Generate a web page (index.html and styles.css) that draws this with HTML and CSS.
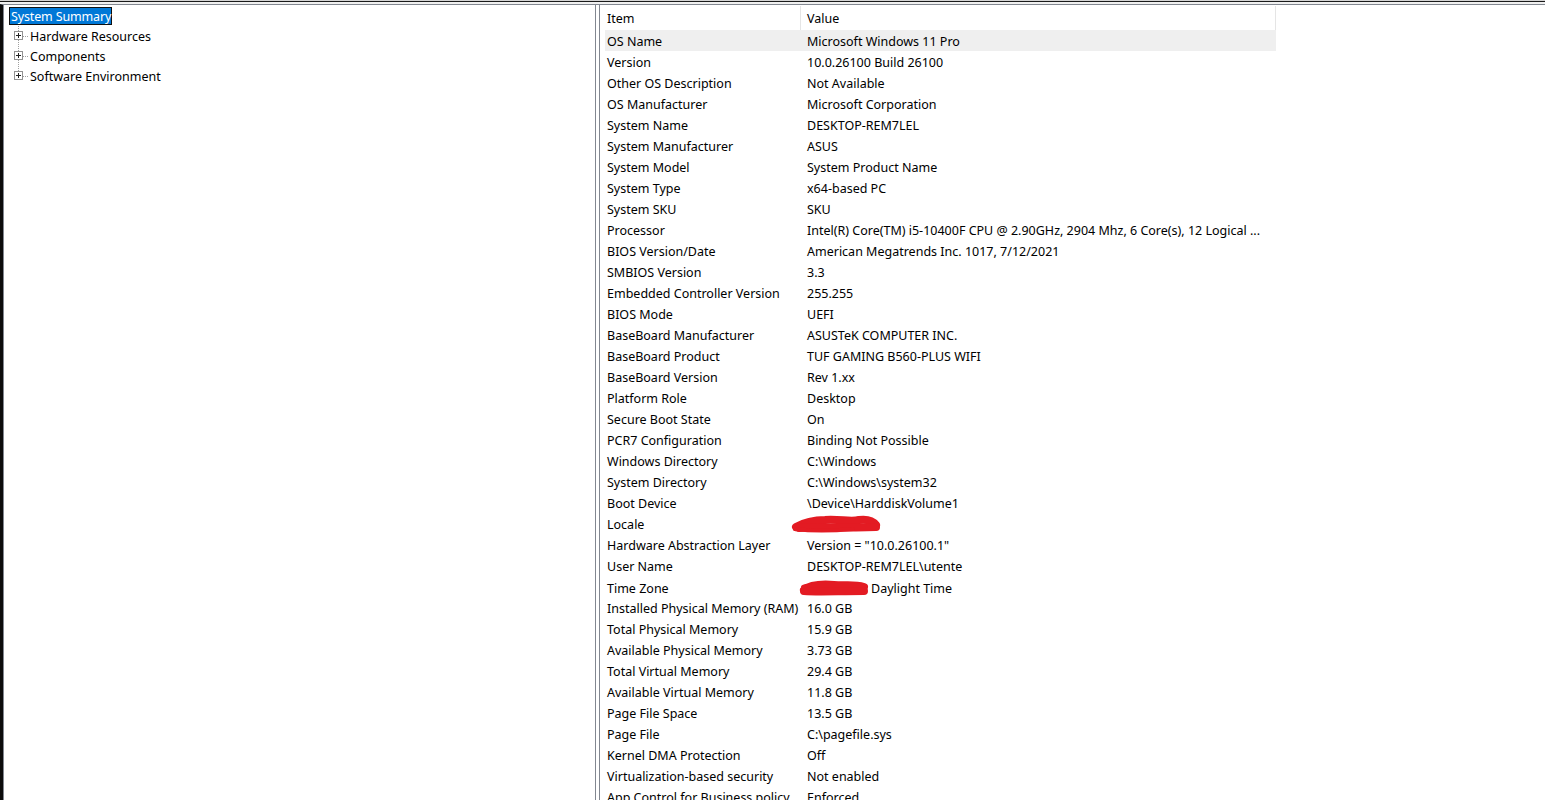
FILE: index.html
```
<!DOCTYPE html>
<html lang="en">
<head>
  <meta charset="UTF-8">
  <title>System Information</title>
  <link rel="stylesheet" href="styles.css">
</head>
<body>
  <div class="chrome"></div>
  <div class="app">
    <div class="tree-pane">
      <div class="tree">
        <div class="node root"><span class="sel">System Summary</span></div>
        <div class="node">
          <svg class="twig" width="20" height="20" viewBox="0 0 20 20">
            <path class="dots" d="M9.5 0V6M9.5 14V20M14 10.5H20"/>
            <rect class="box" x="5.5" y="5.5" width="8" height="8"/>
            <path class="plus" d="M7 9.5H12M9.5 7V12"/>
          </svg>
          <span>Hardware Resources</span>
        </div>
        <div class="node">
          <svg class="twig" width="20" height="20" viewBox="0 0 20 20">
            <path class="dots" d="M9.5 0V6M9.5 14V20M14 10.5H20"/>
            <rect class="box" x="5.5" y="5.5" width="8" height="8"/>
            <path class="plus" d="M7 9.5H12M9.5 7V12"/>
          </svg>
          <span>Components</span>
        </div>
        <div class="node">
          <svg class="twig" width="20" height="20" viewBox="0 0 20 20">
            <path class="dots" d="M9.5 0V6M14 10.5H20"/>
            <rect class="box" x="5.5" y="5.5" width="8" height="8"/>
            <path class="plus" d="M7 9.5H12M9.5 7V12"/>
          </svg>
          <span>Software Environment</span>
        </div>
      </div>
    </div>

    <div class="list-pane">
      <div class="list">
        <div class="head">
          <div class="hcell">Item</div>
          <div class="hcell">Value</div>
        </div>
        <div class="row hot"><div class="cell">OS Name</div><div class="cell">Microsoft Windows 11 Pro</div></div>
        <div class="row"><div class="cell">Version</div><div class="cell">10.0.26100 Build 26100</div></div>
        <div class="row"><div class="cell">Other OS Description</div><div class="cell">Not Available</div></div>
        <div class="row"><div class="cell">OS Manufacturer</div><div class="cell">Microsoft Corporation</div></div>
        <div class="row"><div class="cell">System Name</div><div class="cell">DESKTOP-REM7LEL</div></div>
        <div class="row"><div class="cell">System Manufacturer</div><div class="cell">ASUS</div></div>
        <div class="row"><div class="cell">System Model</div><div class="cell">System Product Name</div></div>
        <div class="row"><div class="cell">System Type</div><div class="cell">x64-based PC</div></div>
        <div class="row"><div class="cell">System SKU</div><div class="cell">SKU</div></div>
        <div class="row"><div class="cell">Processor</div><div class="cell">Intel(R) Core(TM) i5-10400F CPU @ 2.90GHz, 2904 Mhz, 6 Core(s), 12 Logical ...</div></div>
        <div class="row"><div class="cell">BIOS Version/Date</div><div class="cell">American Megatrends Inc. 1017, 7/12/2021</div></div>
        <div class="row"><div class="cell">SMBIOS Version</div><div class="cell">3.3</div></div>
        <div class="row"><div class="cell">Embedded Controller Version</div><div class="cell">255.255</div></div>
        <div class="row"><div class="cell">BIOS Mode</div><div class="cell">UEFI</div></div>
        <div class="row"><div class="cell">BaseBoard Manufacturer</div><div class="cell">ASUSTeK COMPUTER INC.</div></div>
        <div class="row"><div class="cell">BaseBoard Product</div><div class="cell">TUF GAMING B560-PLUS WIFI</div></div>
        <div class="row"><div class="cell">BaseBoard Version</div><div class="cell">Rev 1.xx</div></div>
        <div class="row"><div class="cell">Platform Role</div><div class="cell">Desktop</div></div>
        <div class="row"><div class="cell">Secure Boot State</div><div class="cell">On</div></div>
        <div class="row"><div class="cell">PCR7 Configuration</div><div class="cell">Binding Not Possible</div></div>
        <div class="row"><div class="cell">Windows Directory</div><div class="cell">C:\Windows</div></div>
        <div class="row"><div class="cell">System Directory</div><div class="cell">C:\Windows\system32</div></div>
        <div class="row"><div class="cell">Boot Device</div><div class="cell">\Device\HarddiskVolume1</div></div>
        <div class="row"><div class="cell">Locale</div><div class="cell">
          <svg class="scribble locale" width="92" height="20" viewBox="0 0 92 20">
            <path d="M5 13C12 9 22 6 34 6C48 5 60 8 68 6C76 5 82 7 85 11"/>
            <path d="M8 14C25 13 50 14 85 13"/>
            <path class="thin" d="M4 15C20 17 40 17 62 15"/>
          </svg>
        </div></div>
        <div class="row"><div class="cell">Hardware Abstraction Layer</div><div class="cell">Version = "10.0.26100.1"</div></div>
        <div class="row"><div class="cell">User Name</div><div class="cell">DESKTOP-REM7LEL\utente</div></div>
        <div class="row"><div class="cell">Time Zone</div><div class="cell">
          <svg class="scribble zone" width="72" height="20" viewBox="0 0 72 20">
            <path d="M6 12C12 7 24 6 36 7C48 8 56 6 66 9"/>
            <path d="M6 13C20 14 40 13 66 13"/>
            <path class="thin" d="M5 9L8 8"/>
          </svg><span>Daylight Time</span>
        </div></div>
        <div class="row"><div class="cell">Installed Physical Memory (RAM)</div><div class="cell">16.0 GB</div></div>
        <div class="row"><div class="cell">Total Physical Memory</div><div class="cell">15.9 GB</div></div>
        <div class="row"><div class="cell">Available Physical Memory</div><div class="cell">3.73 GB</div></div>
        <div class="row"><div class="cell">Total Virtual Memory</div><div class="cell">29.4 GB</div></div>
        <div class="row"><div class="cell">Available Virtual Memory</div><div class="cell">11.8 GB</div></div>
        <div class="row"><div class="cell">Page File Space</div><div class="cell">13.5 GB</div></div>
        <div class="row"><div class="cell">Page File</div><div class="cell">C:\pagefile.sys</div></div>
        <div class="row"><div class="cell">Kernel DMA Protection</div><div class="cell">Off</div></div>
        <div class="row"><div class="cell">Virtualization-based security</div><div class="cell">Not enabled</div></div>
        <div class="row"><div class="cell">App Control for Business policy</div><div class="cell">Enforced</div></div>
      </div>
    </div>
  </div>
</body>
</html>
```

FILE: styles.css
```
*{
  box-sizing: border-box;
}
body{
  margin: 0;
  height: 800px;
  overflow: hidden;
  background: #fff;
  color: #000;
  font-family: "Noto Sans", "Open Sans", sans-serif;
  font-size: 12.5px;
}
.chrome{
  height: 4px;
  background: #1a1a1a;
  border-top: 1px solid #d4d4d4;
  border-bottom: 2px solid #f0f0f0;
}
.app{
  display: flex;
  gap: 3px;
  height: 796px;
  border-left: 3px solid #0c0c0c;
  border-top: 1px solid #828790;
}
.tree-pane{
  width: 593px;
  flex: none;
  border-left: 1px solid #828790;
  border-right: 1px solid #828790;
}
.list-pane{
  flex: 1;
  border-left: 1px solid #828790;
  overflow: hidden;
}

/* tree */
.tree{
  padding: 1px 0 0 5px;
}
.node{
  display: flex;
  align-items: center;
  height: 20px;
  white-space: nowrap;
}
.node span{
  margin-left: 1px;
  padding-top: 1px;
}
.sel{
  display: inline-flex;
  align-items: center;
  height: 18px;
  padding: 1px 0 0 1px;
  margin-left: 0 !important;
  background: #0078d7;
  color: #fff;
  border: 1px solid #111;
  letter-spacing: -0.15px;
}
.twig{
  flex: none;
  display: block;
}
.twig .dots{
  fill: none;
  stroke: #a0a0a0;
  stroke-width: 1;
  stroke-dasharray: 1 1;
}
.twig .box{
  fill: #fff;
  stroke: #919191;
}
.twig .plus{
  fill: none;
  stroke: #222;
  stroke-width: 1;
}

/* list */
.list{
  padding-left: 5px;
  width: 676px;
}
.head, .row{
  display: grid;
  grid-template-columns: 196px 475px;
}
.head{
  height: 25px;
}
.hcell{
  margin-top: 1px;
  height: 24px;
  padding-top: 4px;
  line-height: 18px;
  border-right: 1px solid #e5e5e5;
}
.hcell:first-child, .cell:first-child{
  padding-left: 2px;
}
.hcell + .hcell, .cell + .cell{
  padding-left: 6px;
}
.row{
  height: 21px;
}
.row.hot{
  background: #efefef;
}
.cell{
  display: flex;
  align-items: center;
  padding-top: 2px;
  white-space: nowrap;
}
.scribble{
  flex: none;
  display: block;
}
.scribble path{
  fill: none;
  stroke: #e31b23;
  stroke-width: 8;
  stroke-linecap: round;
}
.scribble .thin{
  stroke-width: 4;
}
.scribble.locale{
  margin-left: -16px;
  margin-top: -1px;
}
.scribble.zone{
  margin-left: -9px;
}
.cell span{
  margin-left: 1px;
}
```
